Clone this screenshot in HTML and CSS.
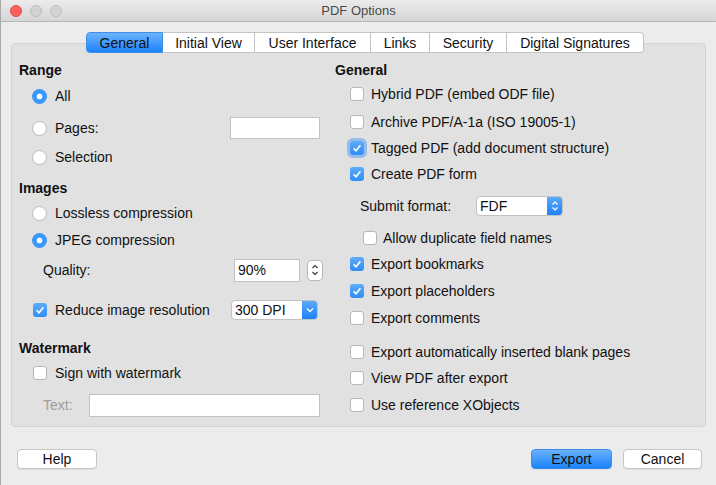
FILE: index.html
```html
<!DOCTYPE html>
<html lang="en">
<head>
    <meta charset="UTF-8">
    <title>PDF Options</title>
    <link rel="stylesheet" href="styles.css">
</head>
<body>
    <div class="window">
        <div class="titlebar">
            <div class="lights">
                <span class="light red"></span>
                <span class="light"></span>
                <span class="light"></span>
            </div>
            <div class="title">PDF Options</div>
        </div>

        <div class="content">
            <!-- Tabs -->
            <div class="tabs">
                <div class="tab active w-general">General</div>
                <div class="tab w-initial">Initial View</div>
                <div class="tab w-ui">User Interface</div>
                <div class="tab w-links">Links</div>
                <div class="tab w-security">Security</div>
                <div class="tab w-digital">Digital Signatures</div>
            </div>

            <div class="panel">
                <!-- Left column -->
                <div class="col left">
                    <div class="head">Range</div>
                    <div class="row mt1 ind-radio"><span class="radio on"></span><span>All</span></div>
                    <div class="row mt6 ind-radio"><span class="radio"></span><span>Pages:</span><span class="field pages"></span></div>
                    <div class="row mt3 ind-radio"><span class="radio"></span><span>Selection</span></div>

                    <div class="head mt6">Images</div>
                    <div class="row ind-radio"><span class="radio"></span><span>Lossless compression</span></div>
                    <div class="row mt1 ind-radio"><span class="radio on"></span><span>JPEG compression</span></div>
                    <div class="row mt4 ind-label">
                        <span>Quality:</span>
                        <span class="field quality">90%</span>
                        <span class="spinner">
                            <svg width="8" height="14" viewBox="0 0 8 14"><path d="M1.5 5 L4 2.5 L6.5 5 M1.5 9 L4 11.5 L6.5 9" fill="none" stroke="#333" stroke-width="1.1"/></svg>
                        </span>
                    </div>
                    <div class="row mt14 ind-check">
                        <span class="check on"><svg width="14" height="14" viewBox="0 0 14 14"><path d="M3.6 7.4 L6 9.8 L10.4 4.2" fill="none" stroke="#fff" stroke-width="1.6"/></svg></span>
                        <span>Reduce image resolution</span>
                        <span class="select dpi">300 DPI<span class="arrow"><svg width="8" height="6" viewBox="0 0 8 6"><path d="M1 1.5 L4 4.5 L7 1.5" fill="none" stroke="#fff" stroke-width="1.3"/></svg></span></span>
                    </div>

                    <div class="head mt13">Watermark</div>
                    <div class="row ind-check"><span class="check"></span><span>Sign with watermark</span></div>
                    <div class="row mt6 ind-label"><span class="muted">Text:</span><span class="field wtext"></span></div>
                </div>

                <!-- Right column -->
                <div class="col right">
                    <div class="head">General</div>
                    <div class="row ind-rcheck"><span class="check"></span><span>Hybrid PDF (embed ODF file)</span></div>
                    <div class="row mt2 ind-rcheck"><span class="check"></span><span>Archive PDF/A-1a (ISO 19005-1)</span></div>
                    <div class="row ind-rcheck"><span class="check on focus"><svg width="14" height="14" viewBox="0 0 14 14"><path d="M3.6 7.4 L6 9.8 L10.4 4.2" fill="none" stroke="#fff" stroke-width="1.6"/></svg></span><span>Tagged PDF (add document structure)</span></div>
                    <div class="row ind-rcheck"><span class="check on"><svg width="14" height="14" viewBox="0 0 14 14"><path d="M3.6 7.4 L6 9.8 L10.4 4.2" fill="none" stroke="#fff" stroke-width="1.6"/></svg></span><span>Create PDF form</span></div>
                    <div class="row mt6 ind-submit">
                        <span class="submit-label">Submit format:</span>
                        <span class="select fdf">FDF<span class="arrow"><svg width="8" height="12" viewBox="0 0 8 12"><path d="M1.5 4.5 L4 2 L6.5 4.5 M1.5 7.5 L4 10 L6.5 7.5" fill="none" stroke="#fff" stroke-width="1.2"/></svg></span></span>
                    </div>
                    <div class="row mt6 ind-allow"><span class="check"></span><span>Allow duplicate field names</span></div>
                    <div class="row ind-rcheck"><span class="check on"><svg width="14" height="14" viewBox="0 0 14 14"><path d="M3.6 7.4 L6 9.8 L10.4 4.2" fill="none" stroke="#fff" stroke-width="1.6"/></svg></span><span>Export bookmarks</span></div>
                    <div class="row mt1 ind-rcheck"><span class="check on"><svg width="14" height="14" viewBox="0 0 14 14"><path d="M3.6 7.4 L6 9.8 L10.4 4.2" fill="none" stroke="#fff" stroke-width="1.6"/></svg></span><span>Export placeholders</span></div>
                    <div class="row mt1 ind-rcheck"><span class="check"></span><span>Export comments</span></div>
                    <div class="row mt8 ind-rcheck"><span class="check"></span><span>Export automatically inserted blank pages</span></div>
                    <div class="row ind-rcheck"><span class="check"></span><span>View PDF after export</span></div>
                    <div class="row mt1 ind-rcheck"><span class="check"></span><span>Use reference XObjects</span></div>
                </div>
            </div>

            <!-- Buttons -->
            <div class="buttons">
                <div class="btn help">Help</div>
                <div class="btn primary">Export</div>
                <div class="btn cancel">Cancel</div>
            </div>
        </div>
    </div>
</body>
</html>
```

FILE: styles.css
```css
* {
    margin: 0;
    padding: 0;
    box-sizing: border-box;
}
body {
    font-family: "Liberation Sans", Arial, sans-serif;
    font-size: 14px;
    color: #111;
    background: #ececec;
}
.window {
    width: 716px;
    height: 485px;
    background: #ececec;
    border-left: 1px solid #a9a9a9;
}
.titlebar {
    height: 22px;
    background: linear-gradient(#ebebeb, #d6d6d6);
    border-bottom: 1px solid #b6b6b6;
    display: flex;
    align-items: center;
    position: relative;
}
.lights {
    display: flex;
    gap: 8px;
    padding-left: 9px;
}
.light {
    width: 12px;
    height: 12px;
    border-radius: 50%;
    background: #d3d3d3;
    border: 1px solid #bdbdbd;
}
.light.red {
    background: #fc605b;
    border-color: #de4a45;
}
.title {
    position: absolute;
    left: 0;
    right: 0;
    text-align: center;
    color: #4a4a4a;
    font-size: 13px;
}
.content {
    padding: 0 10px;
}
.tabs {
    display: flex;
    height: 21px;
    margin: 10px 0 -10px 75px;
    position: relative;
    z-index: 1;
}
.tab {
    background: #fff;
    border: 1px solid #c4c4c4;
    border-left: none;
    display: flex;
    align-items: center;
    justify-content: center;
    color: #111;
}
.tab.active {
    background: linear-gradient(#6db3fb, #1c83fb);
    border: 1px solid #3f8fe6;
    border-radius: 4px 0 0 4px;
}
.tab:last-child {
    border-radius: 0 4px 4px 0;
}
.w-general { width: 77px; }
.w-initial { width: 92px; }
.w-ui { width: 116px; }
.w-links { width: 59px; }
.w-security { width: 77px; }
.w-digital { width: 137px; }

.panel {
    height: 384px;
    background: #e1e1e1;
    border: 1px solid #d3d3d3;
    border-radius: 4px;
    display: flex;
}
.col {
    display: flex;
    flex-direction: column;
}
.left {
    width: 311px;
    padding: 14px 0 0 7px;
}
.right {
    margin-left: 12px;
    padding-top: 15px;
}
.head {
    height: 24px;
    display: flex;
    align-items: center;
    font-weight: bold;
}
.right .head {
    height: 22px;
}
.row {
    height: 26px;
    display: flex;
    align-items: center;
}
.mt1 { margin-top: 1px; }
.mt2 { margin-top: 2px; }
.mt3 { margin-top: 3px; }
.mt4 { margin-top: 4px; }
.mt6 { margin-top: 6px; }
.mt8 { margin-top: 8px; }
.mt13 { margin-top: 13px; }
.mt14 { margin-top: 14px; }

.ind-radio { padding-left: 13px; }
.ind-check { padding-left: 14px; }
.ind-label { padding-left: 24px; }
.ind-rcheck { padding-left: 15px; }
.ind-submit { padding-left: 25px; }
.ind-allow { padding-left: 28px; }

.radio {
    width: 15px;
    height: 15px;
    border-radius: 50%;
    background: #fff;
    border: 1px solid #b9b9b9;
    margin-right: 8px;
    flex-shrink: 0;
}
.radio.on {
    border: none;
    background: radial-gradient(circle, #fff 0, #fff 2.6px, #3d97f6 3.2px);
}
.check {
    width: 14px;
    height: 14px;
    border-radius: 3px;
    background: #fff;
    border: 1px solid #b7b7b7;
    margin-right: 8px;
    flex-shrink: 0;
    display: flex;
}
.right .check {
    margin-right: 7px;
}
.ind-allow .check {
    margin-right: 6px;
}
.check.on {
    background: linear-gradient(#5eabf9, #2f8ef7);
    border: none;
}
.check.focus {
    box-shadow: 0 0 0 3px rgba(90, 160, 240, 0.55);
}

.field {
    background: #fff;
    border: 1px solid #c2c2c2;
    display: flex;
    align-items: center;
    padding-left: 3px;
}
.pages {
    width: 90px;
    height: 22px;
    margin-left: auto;
    margin-right: 3px;
}
.quality {
    width: 66px;
    height: 23px;
    margin-left: auto;
}
.spinner {
    width: 16px;
    height: 21px;
    margin-left: 7px;
    background: #fff;
    border: 1px solid #b9b9b9;
    border-radius: 4px;
    display: flex;
    align-items: center;
    justify-content: center;
}
.wtext {
    width: 231px;
    height: 23px;
    margin-left: auto;
    margin-right: 3px;
}
.muted {
    color: #9d9d9d;
}

.select {
    background: #fff;
    border: 1px solid #c2c2c2;
    border-radius: 4px;
    display: flex;
    align-items: center;
    padding-left: 3px;
    height: 20px;
    overflow: hidden;
}
.select .arrow {
    margin-left: auto;
    width: 15px;
    height: 100%;
    background: linear-gradient(#5aa9fa, #1f82f8);
    display: flex;
    align-items: center;
    justify-content: center;
}
.dpi {
    width: 87px;
    margin-left: auto;
    margin-right: 5px;
}
.fdf {
    width: 87px;
    margin-left: 14px;
}
.submit-label {
    width: 102px;
}

.buttons {
    display: flex;
    margin-top: 22px;
    padding: 0 4px 0 6px;
    gap: 11px;
}
.btn {
    height: 20px;
    display: flex;
    align-items: center;
    justify-content: center;
    background: #fff;
    border: 1px solid #c6c6c6;
    border-radius: 4px;
    box-shadow: 0 1px 0 rgba(0, 0, 0, 0.06);
}
.help {
    width: 80px;
    margin-right: auto;
}
.primary {
    width: 81px;
    background: linear-gradient(#6ab1fb, #1b82fb);
    border-color: #3b8cec;
}
.cancel {
    width: 79px;
}
```
